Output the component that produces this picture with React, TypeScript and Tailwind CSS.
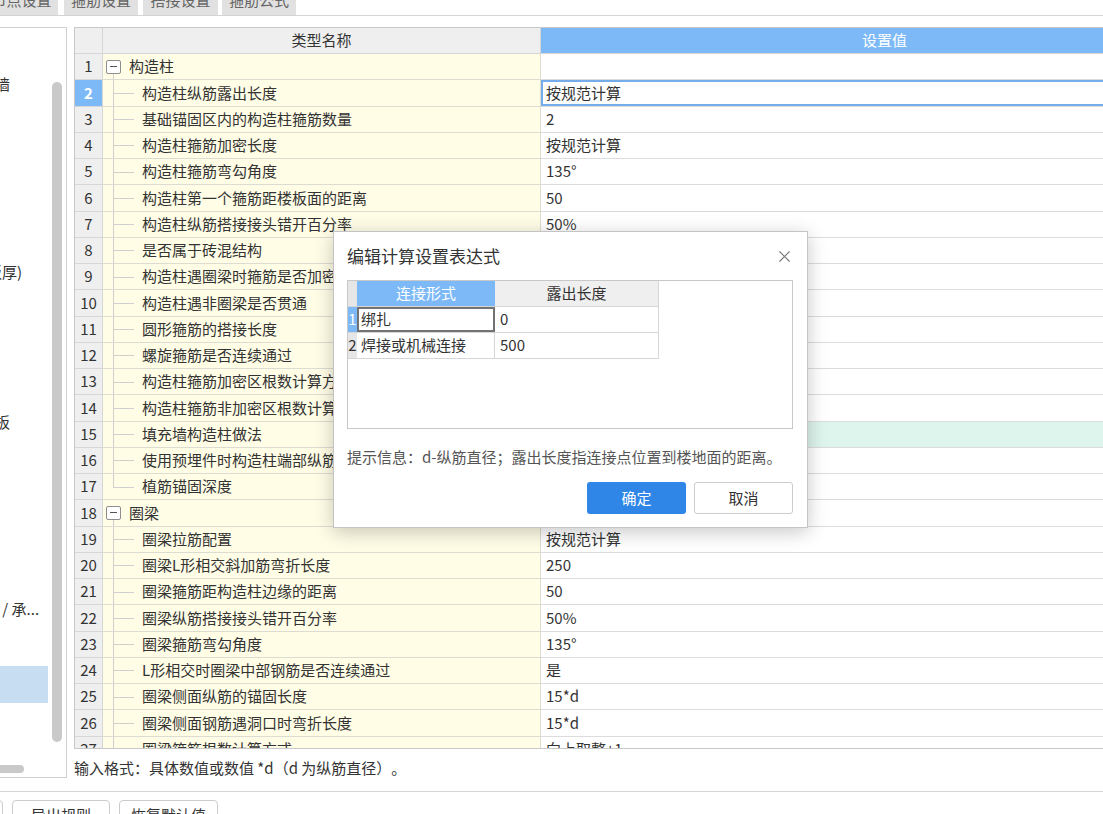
import { X } from "lucide-react";

type Row = {
  n: number;
  name: string;
  value: string;
  group?: boolean;
  last?: boolean;
};

const rows: Row[] = [
  { n: 1, name: "构造柱", value: "", group: true },
  { n: 2, name: "构造柱纵筋露出长度", value: "按规范计算" },
  { n: 3, name: "基础锚固区内的构造柱箍筋数量", value: "2" },
  { n: 4, name: "构造柱箍筋加密长度", value: "按规范计算" },
  { n: 5, name: "构造柱箍筋弯勾角度", value: "135°" },
  { n: 6, name: "构造柱第一个箍筋距楼板面的距离", value: "50" },
  { n: 7, name: "构造柱纵筋搭接接头错开百分率", value: "50%" },
  { n: 8, name: "是否属于砖混结构", value: "否" },
  { n: 9, name: "构造柱遇圈梁时箍筋是否加密", value: "是" },
  { n: 10, name: "构造柱遇非圈梁是否贯通", value: "是" },
  { n: 11, name: "圆形箍筋的搭接长度", value: "max(lae,300)" },
  { n: 12, name: "螺旋箍筋是否连续通过", value: "是" },
  { n: 13, name: "构造柱箍筋加密区根数计算方式", value: "向上取整+1" },
  { n: 14, name: "构造柱箍筋非加密区根数计算方式", value: "向上取整-1" },
  { n: 15, name: "填充墙构造柱做法", value: "上下部均采用植筋" },
  { n: 16, name: "使用预埋件时构造柱端部纵筋弯折长度", value: "10*d" },
  { n: 17, name: "植筋锚固深度", value: "10*d", last: true },
  { n: 18, name: "圈梁", value: "", group: true },
  { n: 19, name: "圈梁拉筋配置", value: "按规范计算" },
  { n: 20, name: "圈梁L形相交斜加筋弯折长度", value: "250" },
  { n: 21, name: "圈梁箍筋距构造柱边缘的距离", value: "50" },
  { n: 22, name: "圈梁纵筋搭接接头错开百分率", value: "50%" },
  { n: 23, name: "圈梁箍筋弯勾角度", value: "135°" },
  { n: 24, name: "L形相交时圈梁中部钢筋是否连续通过", value: "是" },
  { n: 25, name: "圈梁侧面纵筋的锚固长度", value: "15*d" },
  { n: 26, name: "圈梁侧面钢筋遇洞口时弯折长度", value: "15*d" },
  { n: 27, name: "圈梁箍筋根数计算方式", value: "向上取整+1" },
];

// left tree, scrolled sideways so only the tail of some labels shows
const sideItems: { text: string; shift: string }[] = [
  { text: "", shift: "" },
  { text: "砌体墙", shift: "ml-[-35px]" },
  { text: "", shift: "" },
  { text: "", shift: "" },
  { text: "", shift: "" },
  { text: "", shift: "" },
  { text: "现浇板(按板厚)", shift: "ml-[-78px]" },
  { text: "", shift: "" },
  { text: "", shift: "" },
  { text: "", shift: "" },
  { text: "楼梯板", shift: "ml-[-35px]" },
  { text: "", shift: "" },
  { text: "", shift: "" },
  { text: "", shift: "" },
  { text: "", shift: "" },
  { text: "圈梁 / 承...", shift: "ml-[-31px]" },
  { text: "", shift: "" },
  { text: "", shift: "" },
  { text: "", shift: "" },
  { text: "", shift: "" },
];

const line = "bg-[#cfcfcf]";

function NameCell({ row }: { row: Row }) {
  if (row.group) {
    return (
      <div className="relative flex h-full items-center">
        <div className="ml-[3px] flex h-[14px] w-[15px] items-center justify-center rounded-[2px] border border-[#8e8e8e] bg-white">
          <div className="h-px w-[7px] bg-[#555]" />
        </div>
        <span className="ml-[8px]">{row.name}</span>
        <div className={`absolute bottom-0 left-[10px] top-[20px] w-px ${line}`} />
      </div>
    );
  }
  return (
    <div className="relative flex h-full items-center">
      <div
        className={`absolute left-[10px] top-0 w-px ${line} ${row.last ? "h-1/2" : "bottom-0"}`}
      />
      <div className={`absolute left-[10px] top-1/2 h-px w-[21px] ${line}`} />
      <span className="ml-[39px] whitespace-nowrap">{row.name}</span>
    </div>
  );
}

function Grid() {
  return (
    <div className="h-[723px] w-[1155px] overflow-hidden border border-[#c8c8c8] bg-white">
      <div className="flex h-[26px] border-b border-[#d6d6d6]">
        <div className="w-[28px] border-r border-[#d6d6d6] bg-[#efefef]" />
        <div className="flex w-[438px] items-center justify-center border-r border-[#d6d6d6] bg-[#efefef]">
          类型名称
        </div>
        <div className="flex flex-1 items-center justify-center bg-[#7db9f7] text-white">
          设置值
        </div>
      </div>
      {rows.map((row) => {
        const selected = row.n === 2;
        return (
          <div key={row.n} className="flex h-[26.25px]">
            <div
              className={`flex w-[28px] items-center justify-center border-r border-b border-[#d6d6d6] ${
                selected ? "bg-[#7db9f7] font-bold text-white" : "bg-[#efefef]"
              }`}
            >
              {row.n}
            </div>
            <div className="w-[438px] overflow-hidden border-r border-b border-[#dcdcd2] bg-[#fffde6]">
              <NameCell row={row} />
            </div>
            <div
              className={`flex flex-1 items-center border-b border-[#dcdcdc] pl-[5px] ${
                row.n === 15 ? "bg-[#ddf5ec]" : "bg-white"
              } ${selected ? "shadow-[inset_0_0_0_2px_#74ade9]" : ""}`}
            >
              {row.value}
            </div>
          </div>
        );
      })}
    </div>
  );
}

function SidePanel() {
  return (
    <div className="relative h-[751px] w-[67px] shrink-0 overflow-hidden border-y border-r border-[#d0d0d0] bg-white">
      <div className="flex w-[48px] flex-col">
        {sideItems.map((it, i) => (
          <div
            key={i}
            className={`flex h-[37.5px] items-center overflow-hidden whitespace-nowrap ${
              i === 17 ? "bg-[#c6ddf2]" : ""
            }`}
          >
            {it.text ? <span className={it.shift}>{it.text}</span> : null}
          </div>
        ))}
      </div>
      {/* scrollbars */}
      <div className="absolute left-[52px] top-[54px] h-[660px] w-[10px] rounded-full bg-[#c9c9c9]" />
      <div className="absolute left-[-6px] top-[737px] h-[8px] w-[30px] rounded-full bg-[#c9c9c9]" />
    </div>
  );
}

function EditDialog() {
  return (
    <div className="absolute left-[333px] top-[231px] flex h-[297px] w-[475px] flex-col border border-[#c4c4c4] bg-white pl-[13px] pr-[14px] shadow-[0_4px_18px_rgba(0,0,0,0.22)]">
      <div className="flex h-[48px] items-center justify-between">
        <span className="text-[17px] text-[#333]">编辑计算设置表达式</span>
        <X size={19} strokeWidth={1.4} className="mr-[-1px] text-[#7a7a7a]" />
      </div>
      <div className="h-[149px] border border-[#c8c8c8] bg-white">
        <div className="flex h-[26px] w-[311px] border-b border-[#d6d6d6]">
          <div className="w-[9px] bg-[#e6e6e6]" />
          <div className="flex w-[138px] items-center justify-center bg-[#7db9f7] text-white">
            连接形式
          </div>
          <div className="flex w-[164px] items-center justify-center border-r border-[#d6d6d6] bg-[#efefef]">
            露出长度
          </div>
        </div>
        <div className="flex h-[26px] w-[311px] border-b border-[#d6d6d6]">
          <div className="flex w-[9px] items-center justify-center bg-[#7db9f7] text-white">
            1
          </div>
          <div className="flex w-[138px] items-center border-2 border-[#727272] pl-[2px]">
            绑扎
          </div>
          <div className="flex w-[164px] items-center border-r border-[#d6d6d6] pl-[5px]">
            0
          </div>
        </div>
        <div className="flex h-[26px] w-[311px] border-b border-[#d6d6d6]">
          <div className="flex w-[9px] items-center justify-center bg-[#e6e6e6]">
            2
          </div>
          <div className="flex w-[138px] items-center border-r border-[#d6d6d6] pl-[4px]">
            焊接或机械连接
          </div>
          <div className="flex w-[164px] items-center border-r border-[#d6d6d6] pl-[5px]">
            500
          </div>
        </div>
      </div>
      <div className="mt-[18px] leading-[20px] text-[#555]">
        提示信息：d-纵筋直径；露出长度指连接点位置到楼地面的距离。
      </div>
      <div className="mt-[15px] flex justify-end gap-[8px]">
        <button
          type="button"
          className="flex h-[32px] w-[99px] items-center justify-center rounded-[3px] bg-[#2f86e6] text-white"
        >
          确定
        </button>
        <button
          type="button"
          className="flex h-[32px] w-[99px] items-center justify-center rounded-[3px] border border-[#cccccc] bg-white text-[#333]"
        >
          取消
        </button>
      </div>
    </div>
  );
}

export default function App() {
  const tabs = [
    { label: "节点设置", cls: "ml-[-15px] w-[73px]" },
    { label: "箍筋设置", cls: "ml-[6px] w-[74px]" },
    { label: "搭接设置", cls: "ml-[5px] w-[75px]" },
    { label: "箍筋公式", cls: "ml-[4px] w-[74px]" },
  ];

  return (
    <div className="relative h-[814px] w-[1103px] overflow-hidden bg-white font-['Noto_Sans_CJK_SC','Noto_Sans',sans-serif] text-[15px] text-[#333] [text-spacing-trim:space-all]">
      {/* tab strip, scrolled so only the lower half shows */}
      <div className="flex h-[16px] border-b border-[#d4d4d4]">
        {tabs.map((t) => (
          <div
            key={t.label}
            className={`h-[15px] shrink-0 overflow-hidden bg-[#e1e1e1] text-center text-[#666] ${t.cls}`}
          >
            <div className="mt-[-10px] leading-[20px]">{t.label}</div>
          </div>
        ))}
      </div>

      <div className="mt-[11px] flex h-[751px]">
        <SidePanel />
        <div className="ml-[7px] flex flex-col">
          <Grid />
          <div className="mt-[9px] leading-[20px]">
            输入格式：具体数值或数值 *d（d 为纵筋直径）。
          </div>
        </div>
      </div>

      <div className="mt-[13px] flex border-t border-[#d4d4d4] pt-[8px]">
        <button
          type="button"
          className="ml-[-90px] h-[30px] w-[93px] rounded-[4px] border border-[#cccccc] bg-white"
        >
          导入规则
        </button>
        <button
          type="button"
          className="ml-[9px] h-[30px] w-[98px] rounded-[4px] border border-[#cccccc] bg-white"
        >
          导出规则
        </button>
        <button
          type="button"
          className="ml-[9px] h-[30px] w-[99px] rounded-[4px] border border-[#cccccc] bg-white"
        >
          恢复默认值
        </button>
      </div>

      <EditDialog />
    </div>
  );
}
